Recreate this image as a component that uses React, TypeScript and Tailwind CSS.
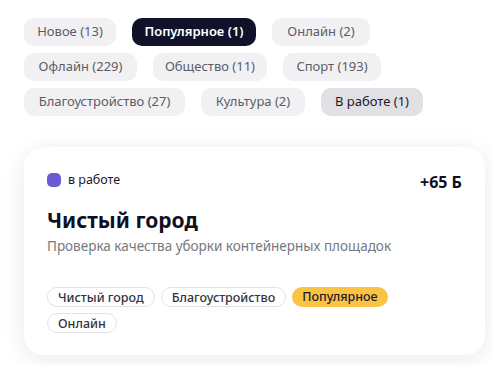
import React from "react";

const filters = [
  { label: "Новое (13)", w: "w-[92px]" },
  { label: "Популярное (1)", w: "w-[124px]", active: true },
  { label: "Онлайн (2)", w: "w-[98px]" },
  { label: "Офлайн (229)", w: "w-[113px]" },
  { label: "Общество (11)", w: "w-[114px]" },
  { label: "Спорт (193)", w: "w-[98px]" },
  { label: "Благоустройство (27)", w: "w-[161px]" },
  { label: "Культура (2)", w: "w-[104px]" },
  { label: "В работе (1)", w: "w-[102px]", status: true },
];

const tags = [
  { label: "Чистый город" },
  { label: "Благоустройство" },
  { label: "Популярное", hot: true },
  { label: "Онлайн" },
];

export default function App() {
  return (
    <div className="w-[492px] h-[365px] bg-white pl-6 pr-[7px] pt-[18px] font-['Noto_Sans',sans-serif] overflow-hidden">
      <div className="flex flex-wrap gap-x-4 gap-y-[7px]">
        {filters.map((f) => (
          <button
            key={f.label}
            className={`${f.w} h-[28px] flex items-center justify-center rounded-[10px] text-[13px] ${
              f.active
                ? "bg-[#11112a] text-white font-semibold"
                : f.status
                ? "bg-[#e1e1e5] text-[#1a1a2a]"
                : "bg-[#f1f1f3] text-[#5c5c66]"
            }`}
          >
            {f.label}
          </button>
        ))}
      </div>

      <div className="mt-[31px] rounded-[20px] bg-white shadow-[0_4px_24px_rgba(20,20,40,0.09)] px-[23px] pt-[24px] pb-[22px]">
        <div className="flex justify-between items-start">
          <div className="flex items-center gap-[7px]">
            <span className="w-[14px] h-[14px] rounded-[5px] bg-[#6b5bd2]" />
            <span className="text-[12.5px] text-[#1a1a2a]">в работе</span>
          </div>
          <span className="text-[16px] font-bold text-[#0f0f1f] leading-none mt-[3px]">+65 Б</span>
        </div>
        <h2 className="mt-[17px] text-[21px] font-bold text-[#0f0f1f] leading-tight">Чистый город</h2>
        <p className="mt-[3px] text-[13.5px] text-[#77777f]">Проверка качества уборки контейнерных площадок</p>
        <div className="mt-[30px] flex flex-wrap gap-[6px] pr-[60px]">
          {tags.map((t) => (
            <span
              key={t.label}
              className={`h-[20px] px-[10px] rounded-full text-[12.5px] font-medium leading-[19px] ${
                t.hot
                  ? "bg-[#fbc344] text-[#1a1a2a]"
                  : "border border-[#e2e2e6] text-[#33333b]"
              }`}
            >
              {t.label}
            </span>
          ))}
        </div>
      </div>
    </div>
  );
}
